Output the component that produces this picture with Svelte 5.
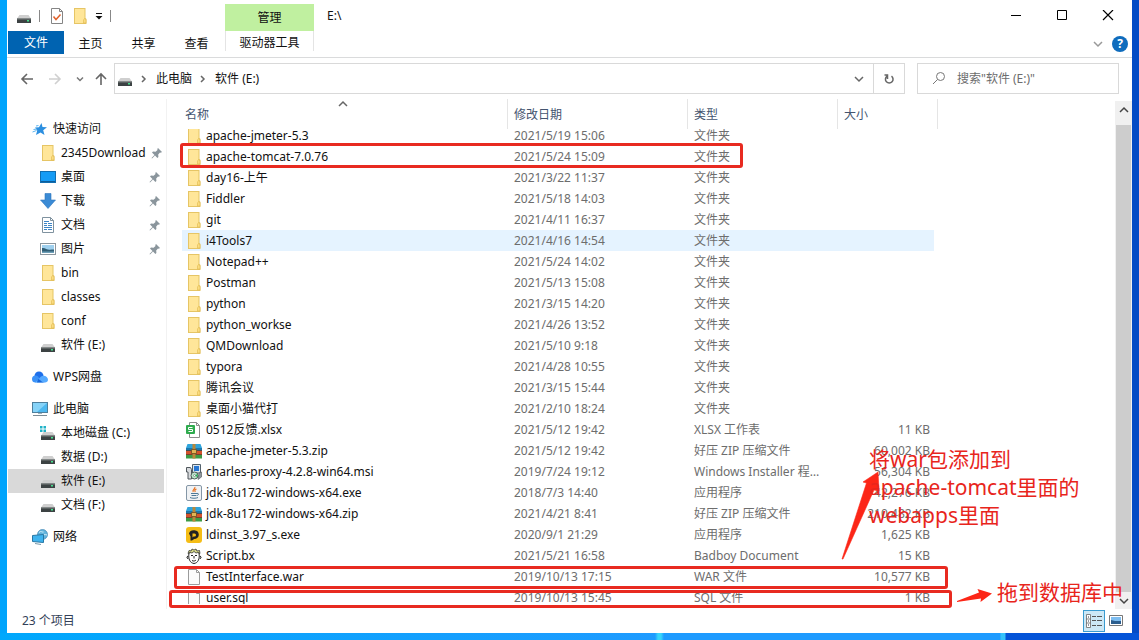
<script>
  const pins = [
    { icon: 'folder', name: '2345Download', pin: true },
    { icon: 'desktop', name: '桌面', pin: true },
    { icon: 'download', name: '下载', pin: true },
    { icon: 'document', name: '文档', pin: true },
    { icon: 'picture', name: '图片', pin: true },
    { icon: 'folder', name: 'bin' },
    { icon: 'folder', name: 'classes' },
    { icon: 'folder', name: 'conf' },
    { icon: 'drive', name: '软件 (E:)' }
  ];
  const groups = [
    { icon: 'star', name: '快速访问', items: pins },
    { icon: 'cloud', name: 'WPS网盘', items: [] },
    {
      icon: 'computer',
      name: '此电脑',
      items: [
        { icon: 'sysdrive', name: '本地磁盘 (C:)' },
        { icon: 'drive', name: '数据 (D:)' },
        { icon: 'drive', name: '软件 (E:)', current: true },
        { icon: 'drive', name: '文档 (F:)' }
      ]
    },
    { icon: 'network', name: '网络', items: [] }
  ];
  const dir = '文件夹';
  const files = [
    ['folder', 'apache-jmeter-5.3', '2021/5/19 15:06', dir, ''],
    ['folder', 'apache-tomcat-7.0.76', '2021/5/24 15:09', dir, ''],
    ['folder', 'day16-上午', '2021/3/22 11:37', dir, ''],
    ['folder', 'Fiddler', '2021/5/18 14:03', dir, ''],
    ['folder', 'git', '2021/4/11 16:37', dir, ''],
    ['folder', 'i4Tools7', '2021/4/16 14:54', dir, ''],
    ['folder', 'Notepad++', '2021/5/24 14:02', dir, ''],
    ['folder', 'Postman', '2021/5/13 15:08', dir, ''],
    ['folder', 'python', '2021/3/15 14:20', dir, ''],
    ['folder', 'python_workse', '2021/4/26 13:52', dir, ''],
    ['folder', 'QMDownload', '2021/5/10 9:18', dir, ''],
    ['folder', 'typora', '2021/4/28 10:55', dir, ''],
    ['folder', '腾讯会议', '2021/3/15 15:44', dir, ''],
    ['folder', '桌面小猫代打', '2021/2/10 18:24', dir, ''],
    ['sheet', '0512反馈.xlsx', '2021/5/12 19:42', 'XLSX 工作表', '11 KB'],
    ['zip', 'apache-jmeter-5.3.zip', '2021/5/12 19:42', '好压 ZIP 压缩文件', '60,002 KB'],
    ['msi', 'charles-proxy-4.2.8-win64.msi', '2019/7/24 19:12', 'Windows Installer 程序包', '56,304 KB'],
    ['java', 'jdk-8u172-windows-x64.exe', '2018/7/3 14:40', '应用程序', '42,276 KB'],
    ['zip', 'jdk-8u172-windows-x64.zip', '2021/4/21 8:41', '好压 ZIP 压缩文件', '210,482 KB'],
    ['ld', 'ldinst_3.97_s.exe', '2020/9/1 21:29', '应用程序', '1,625 KB'],
    ['face', 'Script.bx', '2021/5/21 16:58', 'Badboy Document', '15 KB'],
    ['blank', 'TestInterface.war', '2019/10/13 17:15', 'WAR 文件', '10,577 KB'],
    ['blank', 'user.sql', '2019/10/13 15:45', 'SQL 文件', '1 KB']
  ];
  let hovered = $state(5);
</script>

{#snippet icon(kind)}
  <svg class="icon" viewBox="0 0 16 16" width="16" height="16" aria-hidden="true">
    {#if kind === 'folder'}
      <path d="M2 0h11.500v10l1 1v5H2z" fill="#e6c565" />
      <path d="M3 1h9.500v14H3z" fill="#ffe699" />
      <path d="M12.500 10.500l1.500 1V15h-2.500v-3z" fill="#fbdc80" stroke="#dfb94f" stroke-width=".6" />
    {:else if kind === 'drive' || kind === 'sysdrive'}
      <path d="M3.500 7h9L15 10.500H1z" fill="#cfcfcf" />
      <path d="M1 10.500h14V15H1z" fill="#3c4243" />
      <path d="M1 10.500h14v1H1z" fill="#777c7d" />
      <rect x="11" y="12" width="2" height="1.500" fill="#45e08e" />
      {#if kind === 'sysdrive'}
        <path d="M0 1h2.500v2.500H0zM3.500 1H6v2.500H3.500zM0 4.500h2.500V7H0zM3.500 4.500H6V7H3.500z" fill="#20b2c7" />
      {/if}
    {:else if kind === 'desktop'}
      <rect x=".5" y="2.500" width="15" height="11" fill="#169cf5" stroke="#126eb0" />
      <path d="M1 12h14v1H1z" fill="#0c5d9a" />
    {:else if kind === 'download'}
      <path d="M5 .5h6V7h4.500L8 15.500.500 7H5z" fill="#3b8bd5" stroke="#2d76bd" stroke-width=".6" />
    {:else if kind === 'document'}
      <path d="M2.500.500h8l3 3v12h-11z" fill="#fff" stroke="#7f929f" />
      <path d="M10.500.500v3h3" fill="none" stroke="#7f929f" />
      <path d="M4 4.500h5M4 6.500h3M8 6.500h4M4 8.500h3M8 8.500h4M4 10.500h8M4 12.500h3M8 12.500h4" stroke="#3d85c6" />
    {:else if kind === 'picture'}
      <rect x=".5" y="2.500" width="15" height="11" fill="#fff" stroke="#8c979e" />
      <path d="M2 4h12v8H2z" fill="#9fd0ee" />
      <path d="M2 7c3-.5 4 1 6 1.500s4 0 6 0V12H2z" fill="#315e75" />
      <path d="M2 10.500h12V12H2z" fill="#6d9fb8" />
    {:else if kind === 'star'}
      <path d="M9.500 2l1 4 4.500.3-3.800 2.900 1.300 4.800-4-2.600L4 14l1.200-4.500L3 6.500l4-.3z" fill="#2c8fe0" />
      <path d="M1.500 8.500l3.500-.5M.5 11l4-1.500M4 5l2.500-.5" stroke="#5cb4ef" />
    {:else if kind === 'cloud'}
      <circle cx="7" cy="7" r="4.500" fill="#1e6fea" />
      <circle cx="3.500" cy="10" r="3.500" fill="#3a91f7" />
      <path d="M3 13.500L9 7.500c3-2 7 0 7 3.200 0 1.800-1.400 2.800-3 2.800z" fill="#55aaff" />
      <path d="M5 13.500h8c-4-.3-4.500-3-7-3.500z" fill="#1767dc" />
    {:else if kind === 'computer'}
      <rect x=".5" y="1.500" width="15" height="10" fill="#4db8f0" stroke="#4d7f9d" />
      <path d="M1 2h14L5 11H1z" fill="#86d3f8" />
      <path d="M1 14.500h14" stroke="#7c8b94" />
      <path d="M6 12h4v1H6z" fill="#9fb3be" />
    {:else if kind === 'network'}
      <circle cx="10.500" cy="5.500" r="5" fill="#62b4dc" stroke="#4387b5" stroke-width=".7" />
      <path d="M7 3.500c2-2 3 0 4.500-.5M9 7c2-1 4-2 6-1" stroke="#d4effa" fill="none" />
      <path d="M.5 6.500l11-1v8l-11-1z" fill="#3fb3ee" stroke="#2777a4" />
      <path d="M3 14.500l6 1" stroke="#7898aa" />
    {:else if kind === 'blank'}
      <path d="M2.500.500h8l3 3v12h-11z" fill="#fbfbfb" stroke="#9b9b9b" />
      <path d="M10.500.500v3h3" fill="none" stroke="#9b9b9b" />
    {:else if kind === 'sheet'}
      <path d="M3.500.500h7l3 3v12h-10z" fill="#fff" stroke="#8c8c8c" />
      <path d="M10.500.500v3h3" fill="none" stroke="#8c8c8c" />
      <rect x="0" y="3" width="9" height="9" rx="1" fill="#2fab4e" />
      <path d="M6.500 5.500h-4v2h4v2h-4" fill="none" stroke="#fff" />
    {:else if kind === 'zip'}
      <path d="M1.500 1h13L16 5H0z" fill="#2fa4dc" />
      <path d="M0 5h16v3H0z" fill="#1d77ab" />
      <path d="M0 8h16v4H0z" fill="#d4522b" />
      <path d="M0 12h16v3.500H0z" fill="#3d9a45" />
      <path d="M0 7.500h16M0 11.500h16" stroke="#55392d" stroke-width=".7" />
      <path d="M6.500 1h3v14.500h-3z" fill="#b98739" />
      <path d="M5.500 6.500h5v4h-5z" fill="#e0b556" stroke="#6c4b20" stroke-width=".8" />
    {:else if kind === 'msi'}
      <path d="M6.500.5h8v8.500h-8z" fill="#dce6ee" stroke="#53616c" />
      <path d="M8 2h5v5H8z" fill="#2877d4" />
      <path d="M13 9l2.500-1v5L12 15.500z" fill="#8d979d" stroke="#4b5358" stroke-width=".6" />
      <path d="M.5 3.500h4l1 2V15H2V8H.500z" fill="#d7dadd" stroke="#50575c" />
      <circle cx="8.500" cy="11.500" r="3.500" fill="#bde8cd" stroke="#4e5a56" />
      <path d="M8.500 11.500l3-1.500v3z" fill="#20b454" />
      <circle cx="8.500" cy="11.500" r="1" fill="#fff" stroke="#555" stroke-width=".5" />
    {:else if kind === 'java'}
      <rect x=".5" y=".5" width="15" height="15" rx="1.500" fill="#f0f2f4" stroke="#8496a6" />
      <path d="M8.800 2c1 2-3 2.700-1.600 5M10.500 4c-2 .8-2 1.500-1.200 3" fill="none" stroke="#e87424" stroke-width="1.200" />
      <path d="M5 8.500h6M5.500 10.500h5M4 12.500c2 1 6 1 8 0M11 8.500c2-.5 2 1.500 0 2" fill="none" stroke="#4d7896" />
    {:else if kind === 'ld'}
      <rect width="16" height="16" rx="3" fill="#f5bd16" />
      <path d="M3 6.500a5 4.500 0 019.800 1.200c0 2.600-2 4.300-4.600 4.300L6 13.500H4.500V9.500z" fill="#222" />
      <path d="M6.500 10.500v-4h2a1.500 1.500 0 010 3h-1z" fill="#f5bd16" />
    {:else if kind === 'face'}
      <path d="M3 5c-1 6 1 10 5 10.500 4-.5 6-4.500 5-10.500l-2-2-5-.5z" fill="#fff" stroke="#222" />
      <path d="M2 5.500l1-3 2 .5 1-2 2 1 2-1 1 2 2.500-.5.5 3-2-1-2 .5-2-1.500-2 1.500-2-.5z" fill="#d5d88a" stroke="#222" stroke-width=".7" />
      <path d="M5 7.500h2M9 7.500h2M8 8v2.500M6 12.500c1.500 1 3 .5 4-.5" fill="none" stroke="#222" />
      <path d="M2 8L.800 9 2 11M14 8l1.200 1L14 11" fill="none" stroke="#222" />
    {/if}
  </svg>
{/snippet}

{#snippet chevron(d)}
  <svg viewBox="0 0 10 10" width="10" height="10" aria-hidden="true"><path {d} fill="none" stroke="currentColor" stroke-width="1.500" /></svg>
{/snippet}

<div class="screen">
  <main class="window">
    <header>
      <div class="title">
        <div class="quick">
          {@render icon('drive')}
          <i class="bar"></i>
          <button class="props" aria-label="属性">
            <svg class="icon" viewBox="0 0 16 16" width="16" height="16"><path d="M2.500.500h8l3 3v12h-11z" fill="#fff" stroke="#858585" /><path d="M10.500.500v3h3" fill="none" stroke="#858585" /><path d="M4.500 8.500l2.500 3 4.500-5" fill="none" stroke="#e0622c" stroke-width="1.500" /></svg>
          </button>
          <button aria-label="新建文件夹">{@render icon('folder')}</button>
          <button aria-label="自定义快速访问工具栏">
            <svg viewBox="0 0 8 8" width="8" height="8"><path d="M1 1.500h6" stroke="#111" /><path d="M.500 4h7L4 7.500z" fill="#111" /></svg>
          </button>
          <i class="bar"></i>
        </div>
        <div class="context">管理</div>
        <h1>E:\</h1>
        <div class="controls">
          <button aria-label="最小化"><svg viewBox="0 0 12 12" width="12" height="12"><path d="M1 5.500h10" stroke="#000" /></svg></button>
          <button aria-label="最大化"><svg viewBox="0 0 12 12" width="12" height="12"><path d="M1.500 .5h9v9h-9z" fill="none" stroke="#000" /></svg></button>
          <button aria-label="关闭"><svg viewBox="0 0 12 12" width="12" height="12"><path d="M1 0l10 10M11 0L1 10" stroke="#000" stroke-width="1.200" /></svg></button>
        </div>
      </div>
      <nav class="tabs">
        <button class="file">文件</button>
        <button>主页</button>
        <button>共享</button>
        <button>查看</button>
        <button class="tool">驱动器工具</button>
        <span class="grow"></span>
        <button class="expand" aria-label="展开功能区">{@render chevron('M1 3l4 4 4-4')}</button>
        <button class="help" aria-label="帮助"><span>?</span></button>
      </nav>
    </header>

    <div class="address">
      <div class="arrows">
        <button aria-label="后退"><svg viewBox="0 0 14 14" width="14" height="14"><path d="M13 7H2M7 2L2 7l5 5" fill="none" stroke="#666" stroke-width="1.600" /></svg></button>
        <button aria-label="前进"><svg viewBox="0 0 14 14" width="14" height="14"><path d="M1 7h11M7 2l5 5-5 5" fill="none" stroke="#d0d0d0" stroke-width="1.600" /></svg></button>
        <button class="recent" aria-label="最近位置"><svg viewBox="0 0 8 8" width="8" height="8"><path d="M1 2.500l3 3 3-3" fill="none" stroke="#777" stroke-width="1.500" /></svg></button>
        <button aria-label="上移"><svg viewBox="0 0 14 14" width="14" height="14"><path d="M7 13V2M2 7l5-5 5 5" fill="none" stroke="#666" stroke-width="1.600" /></svg></button>
      </div>
      <div class="path">
        {@render icon('drive')}
        <span class="sep">{@render chevron('M3 2l3 3-3 3')}</span>
        <button>此电脑</button>
        <span class="sep">{@render chevron('M3 2l3 3-3 3')}</span>
        <button>软件 (E:)</button>
        <span class="grow"></span>
        <button class="drop" aria-label="历史记录">{@render chevron('M1 3l4 4 4-4')}</button>
        <button class="refresh" aria-label="刷新">
          <svg viewBox="0 0 14 14" width="14" height="14"><path d="M9.500 4.200a3.800 3.800 0 11-4.500 0M5.500 7V3H2.500" fill="none" stroke="#666" stroke-width="1.500" /></svg>
        </button>
      </div>
      <label class="search">
        <svg viewBox="0 0 14 14" width="14" height="14" aria-hidden="true"><circle cx="8.500" cy="4.500" r="4" fill="none" stroke="#777" /><path d="M5.500 7.500L1 12" stroke="#777" /></svg>
        <input type="text" aria-label="搜索" placeholder={'搜索"软件 (E:)"'} />
      </label>
    </div>

    <div class="body">
      <nav class="tree">
        {#each groups as g}
          <section>
            <a class="root" href="#top">{@render icon(g.icon)}<span>{g.name}</span></a>
            {#each g.items as it}
              <a href="#top" class:current={it.current}>
                {@render icon(it.icon)}<span>{it.name}</span>
                {#if it.pin}
                  <svg class="pin" viewBox="0 0 12 12" width="12" height="12" aria-hidden="true"><path d="M7 1l4 4-1.200.8-.8-.2-1.800 1.900.2 2.500-1 1-2.400-2.500L1 11.500l-.5-.5 3-3L1 5.500l1-1 2.600.3 1.900-1.900-.2-.9z" fill="#8a959c" /></svg>
                {/if}
              </a>
            {/each}
          </section>
        {/each}
      </nav>

      <div class="list">
        <table>
          <thead>
            <tr>
              <th>名称<span class="sort">{@render chevron('M1 7l4-4 4 4')}</span></th>
              <th>修改日期</th>
              <th>类型</th>
              <th>大小</th>
            </tr>
          </thead>
          <tbody>
            {#each files as [kind, name, date, type, size], i}
              <tr class:hovered={i === hovered} onmouseenter={() => (hovered = i)}>
                <td class="name">{@render icon(kind)}<span>{name}</span></td>
                <td>{date}</td>
                <td>{type}</td>
                <td class="size">{size}</td>
              </tr>
            {/each}
          </tbody>
        </table>
      </div>

      <div class="scroll" aria-hidden="true">
        <span>{@render chevron('M1 7l4-4 4 4')}</span>
        <i></i>
        <span>{@render chevron('M1 3l4 4 4-4')}</span>
      </div>
    </div>

    <footer>
      <span>23 个项目</span>
      <span class="grow"></span>
      <button class="view on" aria-label="详细信息">
        <svg viewBox="0 0 18 14" width="18" height="14"><path d="M1.500.500h4v13h-4zM1 5h5M1 9h5" fill="#fff" stroke="#777" stroke-width=".9" /><path d="M3 3h1M3 7h1M3 11h1" stroke="#234" /><path d="M7 2.500h4M12 2.500h5M7 6.500h4M12 6.500h5M7 11.500h4M12 11.500h5" stroke="#555" /></svg>
      </button>
      <button class="view" aria-label="大缩略图">
        <svg viewBox="0 0 14 12" width="14" height="12"><path d="M.5.500h13v10H.500z" fill="#fff" stroke="#777" /><path d="M2 2h10v7H2z" fill="#7dbdf0" /><path d="M2 5l4 1 6 0v3H2z" fill="#2b5d8d" /></svg>
      </button>
    </footer>
  </main>

  <div class="frame tomcat"></div>
  <div class="frame war"></div>
  <div class="frame sql"></div>
  <svg class="arrow up" viewBox="0 0 40 90" width="40" height="90" aria-hidden="true"><path d="M2 88L26.500 12 23 11 38 1l1 19-5-1L3 88z" fill="#fc2617" stroke="#fc2617" stroke-width=".6" /></svg>
  <svg class="arrow right" viewBox="0 0 36 16" width="36" height="16" aria-hidden="true"><path d="M0 13L22 4.500 20.500 1 35 5.500 23.500 14l.5-3.500L0 14z" fill="#fc2617" /></svg>
  <p class="note first">将war包添加到<br />apache-tomcat里面的<br />webapps里面</p>
  <p class="note second">拖到数据库中</p>
</div>

<style>
  :global(body) { margin: 0; }
  .screen {
    position: relative;
    box-sizing: border-box;
    height: 100vh;
    padding: 0 7px 7px;
    overflow: hidden;
    background:
      linear-gradient(90deg, #00a8fc 0, #1e9bff 655px, #37d5fa 658px, #37d5fa 661px, #1e9bff 664px, #1e9bff 1000px, #35c3fa 1001px, #35c3fa 1005px, #0454d8 1006px) bottom / 100% 7px no-repeat,
      linear-gradient(90deg, #00a4fc 50%, #044bc5 50%);
    font: 12px/16px "Noto Sans", "Noto Sans CJK SC", sans-serif;
    color: #111;
  }
  .window { display: flex; flex-direction: column; height: 100%; background: #fff; }
  button { padding: 0; border: 0; background: none; font: inherit; color: inherit; }
  svg { display: block; flex: none; }
  .grow { flex: 1; }
  a { color: inherit; text-decoration: none; }

  header { border-bottom: 1px solid #dadbdc; }
  .title { display: flex; height: 31px; align-items: center; }
  .quick { display: flex; align-items: center; gap: 7px; width: 209px; padding-left: 9px; }
  .props { margin-left: 2px; }
  .bar { width: 1px; height: 12px; background: #888; }
  .context { display: grid; place-items: center; align-self: flex-end; width: 89px; height: 27px; background: #c0f0a0; }
  h1 { flex: 1; margin: 0 0 0 13px; font-size: 12px; font-weight: 400; }
  .controls { display: flex; margin-right: 1px; }
  .controls button { display: grid; place-items: center; width: 46px; height: 30px; }
  .tabs { display: flex; height: 26px; align-items: flex-start; }
  .tabs button { height: 25px; width: 53px; }
  .tabs .file { width: 56px; margin-left: 1px; height: 23px; background: #0063b1; color: #fff; }
  .tabs .tool { width: 89px; margin-left: 2px; border: solid #e4e4e4; border-width: 0 1px; height: 20px; padding-top: 4px; }
  .tabs .expand { display: grid; place-items: center; width: 24px; color: #999; }
  .tabs .help { width: 16px; height: 16px; margin: 5px 4px 0 2px; border-radius: 8px; background: #0f6cbd; color: #fff; font-weight: 700; line-height: 16px; }

  .address { display: flex; align-items: center; padding: 5px 13px; }
  .arrows { display: flex; align-items: center; gap: 14px; width: 94px; }
  .arrows .recent { margin-right: -4px; }
  .path { display: flex; flex: 1; align-items: center; height: 29px; padding-left: 2px; border: 1px solid #d9d9d9; }
  .sep { margin: 0 7px 0 6px; color: #666; }
  .drop { padding: 0 9px; color: #666; }
  .refresh { display: grid; place-items: center; width: 31px; height: 100%; border-left: 1px solid #d9d9d9; }
  .search { display: flex; align-items: center; width: 186px; height: 29px; margin-left: 12px; padding-left: 14px; gap: 11px; border: 1px solid #d9d9d9; }
  .search input { flex: 1; min-width: 0; padding: 0; border: 0; outline: 0; font: inherit; background: none; }
  .search input::placeholder { color: #6d6d6d; opacity: 1; }

  .body { display: flex; flex: 1; min-height: 0; }
  .tree { width: 159px; padding-top: 18px; border-right: 1px solid #f2f2f2; }
  .tree section { margin-bottom: 8px; }
  .tree a { display: flex; align-items: center; gap: 5px; height: 24px; margin: 0 2px 0 1px; padding-left: 32px; }
  .tree a.root { padding-left: 24px; }
  .tree a.current { background: #d9d9d9; }
  .tree span { white-space: nowrap; }
  .pin { margin-left: auto; margin-right: 3px; }

  .list { flex: 1; min-width: 0; margin-bottom: 5px; overflow: hidden; padding-left: 15px; }
  table, thead, tbody { display: block; }
  thead { position: relative; z-index: 1; background: #fff; }
  tr { display: grid; grid-template-columns: 326px 180px 150px 96px; width: max-content; }
  tbody { margin-top: -4px; }
  tbody tr { height: 21px; align-items: center; }
  tbody tr.hovered { background: #e5f3ff; }
  th { position: relative; height: 30px; padding: 2px 0 0 6px; border-right: 1px solid #e5e5e5; box-sizing: border-box; line-height: 28px; text-align: left; font-weight: 400; color: #44546f; }
  th:first-child { padding-left: 3px; }
  th:last-child { width: 100px; }
  .sort { position: absolute; left: 156px; top: 0; color: #666; }
  td { padding: 0 0 0 6px; color: #6d6d6d; white-space: nowrap; }
  td:nth-child(3) { overflow: hidden; text-overflow: ellipsis; margin-right: 14px; }
  .name { display: flex; align-items: center; gap: 4px; padding-left: 4px; color: #111; }
  .size { padding-right: 4px; text-align: right; }

  .scroll { display: flex; flex-direction: column; width: 17px; margin-top: 2px; background: #f0f0f0; color: #444; }
  .scroll span { display: grid; place-items: center; height: 17px; }
  .scroll i { flex: 1; margin: 7px 1px 0; background: #cdcdcd; }

  footer { display: flex; align-items: center; height: 24px; padding: 0 5px 0 15px; color: #333f58; }
  .view { display: grid; place-items: center; width: 22px; height: 22px; }
  .view.on { border: 1px solid #3a9bd0; background: #cce8f6; box-sizing: border-box; }

  .frame { position: absolute; box-sizing: border-box; border: 3px solid #e82a20; border-radius: 3px; pointer-events: none; }
  .tomcat { left: 180px; top: 143px; width: 563px; height: 25px; }
  .war { left: 174px; top: 566px; width: 774px; height: 23px; }
  .sql { left: 169px; top: 590px; width: 783px; height: 18px; }
  .arrow { position: absolute; }
  .up { left: 840px; top: 471px; }
  .right { left: 957px; top: 588px; }
  .note { position: absolute; margin: 0; font-size: 21px; line-height: 28px; color: #e8251c; white-space: nowrap; }
  .first { left: 869px; top: 445px; }
  .second { left: 997px; top: 578px; }
</style>
